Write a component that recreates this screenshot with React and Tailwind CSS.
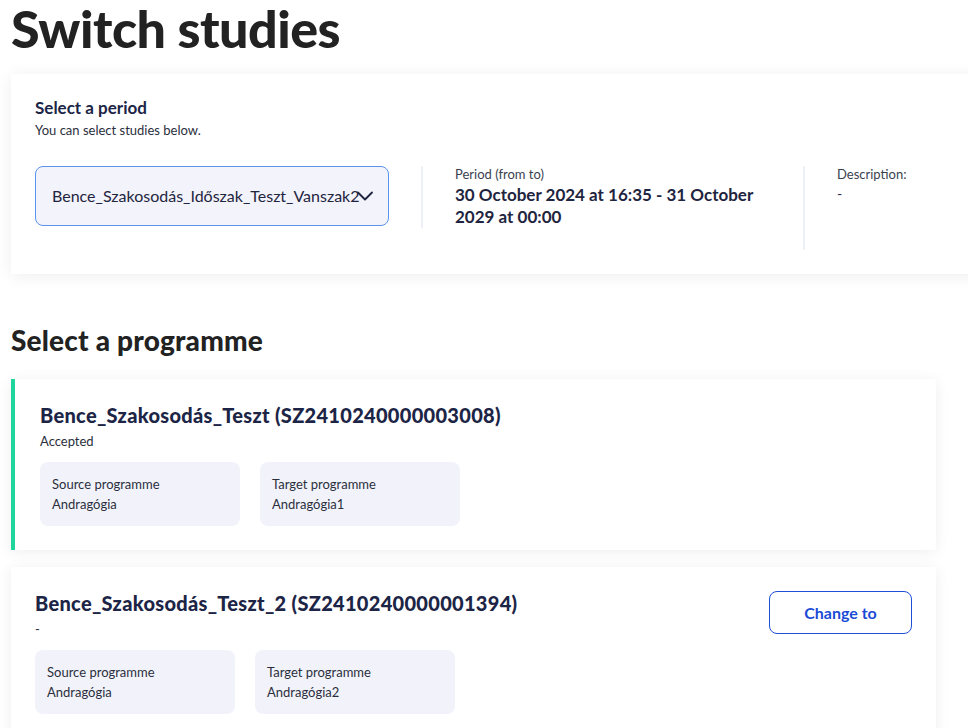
import { ChevronDown } from "lucide-react";

const PROGRAMMES = [
  {
    id: "a",
    title: "Bence_Szakosodás_Teszt (SZ2410240000003008)",
    status: "Accepted",
    source: "Andragógia",
    target: "Andragógia1",
    active: true,
  },
  {
    id: "b",
    title: "Bence_Szakosodás_Teszt_2 (SZ2410240000001394)",
    status: "-",
    source: "Andragógia",
    target: "Andragógia2",
    active: false,
  },
];

const InfoBox = ({ label, value }) => (
  <div className="w-[200px] rounded-lg bg-[#f2f3fa] px-3 py-3 text-[13px] leading-5 text-[#2b2f3d]">
    <div>{label}</div>
    <div>{value}</div>
  </div>
);

const ProgrammeCard = ({ p }) => (
  <div
    className={`flex w-[925px] items-start justify-between bg-white pt-6 pb-6 pr-6 shadow-[0_2px_14px_rgba(0,0,0,0.07)] ${
      p.active ? "border-l-4 border-[#1fd59b] pl-[25px]" : "pl-6"
    }`}
  >
    <div>
      <h3 className="text-[20px] font-black leading-6 tracking-[0.3px] text-[#1c2546]">{p.title}</h3>
      <div className="mt-1 text-[13px] leading-5 text-[#2b2f3d]">{p.status}</div>
      <div className="mt-[11px] flex gap-5">
        <InfoBox label="Source programme" value={p.source} />
        <InfoBox label="Target programme" value={p.target} />
      </div>
    </div>
    {!p.active && (
      <button className="h-[43px] w-[143px] rounded-lg border border-[#1d4fd8] text-[16px] font-bold text-[#1b4bd6]">
        Change to
      </button>
    )}
  </div>
);

export default function App() {
  return (
    <div className="min-h-[728px] overflow-hidden bg-white pl-[11px] font-['Lato','Noto_Sans',sans-serif]">
      <h1 className="pt-[2px] text-[52px] font-black leading-[52px] tracking-[-0.5px] text-[#222222]">
        Switch studies
      </h1>

      <div className="mt-[20px] w-[1000px] bg-white px-6 pt-6 pb-6 shadow-[0_2px_16px_rgba(0,0,0,0.07)]">
        <h2 className="text-[17px] font-bold leading-5 text-[#1c2546]">Select a period</h2>
        <p className="mt-[4px] text-[13px] leading-4 text-[#2b2f3d]">You can select studies below.</p>

        <div className="mt-[28px] flex items-start gap-8">
          <div className="relative flex h-[60px] w-[354px] items-center rounded-lg border border-[#5b93f0] bg-[#f2f3fb] pl-4">
            <span className="whitespace-nowrap text-[16px] text-[#1f2540]">
              Bence_Szakosodás_Időszak_Teszt_Vanszak2
            </span>
            <ChevronDown
              className="absolute right-[9px] top-[15px] h-7 w-7 text-[#1f2540]"
              strokeWidth={1.6}
            />
          </div>

          <div className="w-[350px] border-l-2 border-[#eef0f8] pl-8">
            <div className="text-[13px] leading-4 text-[#3a3f4f]">Period (from to)</div>
            <div className="mt-[2px] text-[17px] font-bold leading-[22px] text-[#1f2540]">
              30 October 2024 at 16:35 - 31 October 2029 at 00:00
            </div>
          </div>

          <div className="min-h-[84px] border-l-2 border-[#eef0f8] pl-8">
            <div className="text-[13px] leading-4 text-[#3a3f4f]">Description:</div>
            <div className="mt-[2px] text-[14px] leading-5 text-[#1f2540]">-</div>
          </div>
        </div>
      </div>

      <h2 className="mt-[50px] text-[28px] font-black leading-8 tracking-[0.2px] text-[#222222]">Select a programme</h2>

      <div className="mt-[23px] flex flex-col gap-[17px]">
        {PROGRAMMES.map((p) => (
          <ProgrammeCard key={p.id} p={p} />
        ))}
      </div>
    </div>
  );
}
